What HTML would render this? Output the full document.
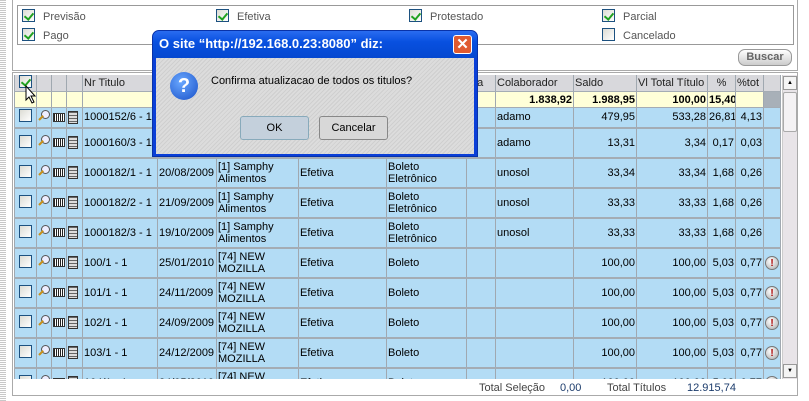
<!DOCTYPE html>
<html><head><meta charset="utf-8"><style>
*{margin:0;padding:0;box-sizing:border-box}
body{width:809px;height:401px;overflow:hidden;background:#fff;font-family:"Liberation Sans",Arial,sans-serif;font-size:11px;color:#000;position:relative}
.abs{position:absolute}
.cb{position:absolute;width:13px;height:13px;border:1px solid #1c5180;background:linear-gradient(135deg,#dcdcd4,#fff)}
.chk::after{content:"";position:absolute;left:3px;top:1px;width:4px;height:7px;border:solid #21a121;border-width:0 2px 2px 0;transform:rotate(40deg)}
.lbl{position:absolute;color:#555;font-size:11px}
.grid{position:absolute;left:14px;top:75px;width:768px;height:304px;overflow:hidden;background:#fff}
table{border-collapse:collapse;table-layout:fixed;width:766px}
td{border-left:1px solid #a0a8b0;border-right:1px solid #a0a8b0;border-bottom:2px solid #a4acb4;background:#b3dcf5;padding:0 1px;line-height:12px;overflow:hidden;white-space:nowrap;vertical-align:middle}
tr.h td{background:#d8d8dc;height:15px;border-bottom:1px solid #a4acb4;color:#222}
tr.t td{background:#ffffd8;height:16px;font-weight:bold;text-align:right;border-bottom:1px solid #a4acb4}
tr.r1 td{height:20px}
tr.r td{height:30px}
.n{text-align:right}
.w{white-space:normal}
.ic{display:inline-block;vertical-align:middle}
.mag{width:12px;height:12px;position:relative;display:inline-block}
.mag::before{content:"";position:absolute;right:0;top:0;width:7px;height:7px;border:1px solid #555;border-radius:50%;background:#eef}
.mag::after{content:"";position:absolute;left:1px;bottom:1px;width:6px;height:2px;background:#c8901a;transform:rotate(-45deg);transform-origin:left}
.bar{width:12px;height:9px;border:1px solid #333;background:repeating-linear-gradient(90deg,#222 0 1px,#fff 1px 2px)}
.doc{width:10px;height:13px;border:1px solid #333;background:repeating-linear-gradient(180deg,#666 0 1px,#ddd 1px 3px)}
.warn{display:inline-block;width:14px;height:14px;border-radius:50%;background:radial-gradient(circle at 40% 35%,#fff,#aaa);border:1px solid #777;color:#a00;font-weight:bold;font-size:10px;text-align:center;line-height:13px}
</style></head><body>
<div class="abs" style="left:0;top:0;width:6px;height:401px;background:repeating-linear-gradient(180deg,#c8c8c8 0 1px,#fff 1px 2px)"></div>
<div class="abs" style="left:12px;top:-1px;width:786px;height:72px;border:1px solid #aaa;background:#fff"></div>
<div class="abs" style="left:17px;top:5px;width:777px;height:40px;border:1px solid #999"></div>
<div class="cb chk" style="left:22px;top:9px"></div><div class="lbl" style="left:43px;top:11px">Previsão</div>
<div class="cb chk" style="left:22px;top:28px"></div><div class="lbl" style="left:43px;top:30px">Pago</div>
<div class="cb chk" style="left:216px;top:9px"></div><div class="lbl" style="left:237px;top:11px">Efetiva</div>
<div class="cb chk" style="left:409px;top:9px"></div><div class="lbl" style="left:430px;top:11px">Protestado</div>
<div class="cb chk" style="left:602px;top:9px"></div><div class="lbl" style="left:623px;top:11px">Parcial</div>
<div class="cb" style="left:602px;top:28px"></div><div class="lbl" style="left:623px;top:30px">Cancelado</div>
<div class="abs" style="left:738px;top:49px;width:54px;height:17px;border:1px solid #999;border-radius:7px;background:linear-gradient(#fff,#ccc);font-weight:bold;color:#666;text-align:center;line-height:15px;font-size:11px">Buscar</div>

<div class="abs" style="left:12px;top:72px;width:786px;height:324px;border-left:1px solid #aaa;border-right:1px solid #aaa;border-bottom:1px solid #aaa;border-top:1px solid #aaa"></div>
<div class="abs" style="left:782px;top:75px;width:15px;height:304px;background:#e8e4e8;border-left:1px solid #ccc"></div>
<div class="abs" style="left:783px;top:76px;width:14px;height:14px;border:1px solid #999;background:#f4f4f4;font-size:6px;text-align:center;line-height:12px">▲</div>
<div class="abs" style="left:783px;top:92px;width:14px;height:40px;border:1px solid #aaa;border-radius:2px;background:#f4f2f4"></div>
<div class="abs" style="left:783px;top:364px;width:14px;height:14px;border:1px solid #999;background:#f4f4f4;font-size:6px;text-align:center;line-height:12px">▼</div>

<div class="grid"><table>
<colgroup><col style="width:22px"><col style="width:15px"><col style="width:15px"><col style="width:16px"><col style="width:75px"><col style="width:59px"><col style="width:82px"><col style="width:88px"><col style="width:80px"><col style="width:29px"><col style="width:78px"><col style="width:63px"><col style="width:71px"><col style="width:28px"><col style="width:28px"><col style="width:17px"></colgroup>
<tr class="h"><td><span class="cb chk" style="position:relative;display:inline-block;left:3px"></span></td><td></td><td></td><td></td><td>Nr Titulo</td><td></td><td></td><td></td><td></td><td>nta</td><td>Colaborador</td><td>Saldo</td><td>Vl Total Título</td><td style="text-align:center">%</td><td>%tot</td><td></td></tr>
<tr class="t"><td></td><td></td><td></td><td></td><td></td><td></td><td></td><td></td><td></td><td></td><td>1.838,92</td><td>1.988,95</td><td>100,00</td><td>15,40</td><td></td><td style="background:#a8b0b8"></td></tr>
<tr class="r1"><td><span class="cb" style="position:relative;display:inline-block;left:3px"></span></td><td><span class="mag"></span></td><td><span class="ic bar"></span></td><td><span class="ic doc"></span></td><td>1000152/6 - 1</td><td></td><td></td><td></td><td></td><td></td><td>adamo</td><td class="n">479,95</td><td class="n">533,28</td><td class="n">26,81</td><td class="n">4,13</td><td></td></tr>
<tr class="r"><td><span class="cb" style="position:relative;display:inline-block;left:3px"></span></td><td><span class="mag"></span></td><td><span class="ic bar"></span></td><td><span class="ic doc"></span></td><td>1000160/3 - 1</td><td></td><td></td><td></td><td></td><td></td><td>adamo</td><td class="n">13,31</td><td class="n">3,34</td><td class="n">0,17</td><td class="n">0,03</td><td></td></tr>
<tr class="r"><td><span class="cb" style="position:relative;display:inline-block;left:3px"></span></td><td><span class="mag"></span></td><td><span class="ic bar"></span></td><td><span class="ic doc"></span></td><td>1000182/1 - 1</td><td>20/08/2009</td><td class="w">[1] Samphy Alimentos</td><td>Efetiva</td><td class="w">Boleto Eletrônico</td><td></td><td>unosol</td><td class="n">33,34</td><td class="n">33,34</td><td class="n">1,68</td><td class="n">0,26</td><td></td></tr>
<tr class="r"><td><span class="cb" style="position:relative;display:inline-block;left:3px"></span></td><td><span class="mag"></span></td><td><span class="ic bar"></span></td><td><span class="ic doc"></span></td><td>1000182/2 - 1</td><td>21/09/2009</td><td class="w">[1] Samphy Alimentos</td><td>Efetiva</td><td class="w">Boleto Eletrônico</td><td></td><td>unosol</td><td class="n">33,33</td><td class="n">33,33</td><td class="n">1,68</td><td class="n">0,26</td><td></td></tr>
<tr class="r"><td><span class="cb" style="position:relative;display:inline-block;left:3px"></span></td><td><span class="mag"></span></td><td><span class="ic bar"></span></td><td><span class="ic doc"></span></td><td>1000182/3 - 1</td><td>19/10/2009</td><td class="w">[1] Samphy Alimentos</td><td>Efetiva</td><td class="w">Boleto Eletrônico</td><td></td><td>unosol</td><td class="n">33,33</td><td class="n">33,33</td><td class="n">1,68</td><td class="n">0,26</td><td></td></tr>
<tr class="r"><td><span class="cb" style="position:relative;display:inline-block;left:3px"></span></td><td><span class="mag"></span></td><td><span class="ic bar"></span></td><td><span class="ic doc"></span></td><td>100/1 - 1</td><td>25/01/2010</td><td class="w">[74] NEW MOZILLA</td><td>Efetiva</td><td>Boleto</td><td></td><td></td><td class="n">100,00</td><td class="n">100,00</td><td class="n">5,03</td><td class="n">0,77</td><td><span class="warn">!</span></td></tr>
<tr class="r"><td><span class="cb" style="position:relative;display:inline-block;left:3px"></span></td><td><span class="mag"></span></td><td><span class="ic bar"></span></td><td><span class="ic doc"></span></td><td>101/1 - 1</td><td>24/11/2009</td><td class="w">[74] NEW MOZILLA</td><td>Efetiva</td><td>Boleto</td><td></td><td></td><td class="n">100,00</td><td class="n">100,00</td><td class="n">5,03</td><td class="n">0,77</td><td><span class="warn">!</span></td></tr>
<tr class="r"><td><span class="cb" style="position:relative;display:inline-block;left:3px"></span></td><td><span class="mag"></span></td><td><span class="ic bar"></span></td><td><span class="ic doc"></span></td><td>102/1 - 1</td><td>24/09/2009</td><td class="w">[74] NEW MOZILLA</td><td>Efetiva</td><td>Boleto</td><td></td><td></td><td class="n">100,00</td><td class="n">100,00</td><td class="n">5,03</td><td class="n">0,77</td><td><span class="warn">!</span></td></tr>
<tr class="r"><td><span class="cb" style="position:relative;display:inline-block;left:3px"></span></td><td><span class="mag"></span></td><td><span class="ic bar"></span></td><td><span class="ic doc"></span></td><td>103/1 - 1</td><td>24/12/2009</td><td class="w">[74] NEW MOZILLA</td><td>Efetiva</td><td>Boleto</td><td></td><td></td><td class="n">100,00</td><td class="n">100,00</td><td class="n">5,03</td><td class="n">0,77</td><td><span class="warn">!</span></td></tr>
<tr class="r"><td><span class="cb" style="position:relative;display:inline-block;left:3px"></span></td><td><span class="mag"></span></td><td><span class="ic bar"></span></td><td><span class="ic doc"></span></td><td>104/1 - 1</td><td>24/05/2010</td><td class="w">[74] NEW MOZILLA</td><td>Efetiva</td><td>Boleto</td><td></td><td></td><td class="n">100,00</td><td class="n">100,00</td><td class="n">5,03</td><td class="n">0,77</td><td><span class="warn">!</span></td></tr>
</table></div>
<div class="abs" style="left:479px;top:382px;color:#444">Total Seleção</div>
<div class="abs" style="left:560px;top:382px;color:#1c3c6c">0,00</div>
<div class="abs" style="left:607px;top:382px;color:#444">Total Títulos</div>
<div class="abs" style="left:687px;top:382px;color:#1c3c6c">12.915,74</div>

<!-- dialog -->
<div class="abs" style="left:152px;top:30px;width:326px;height:127px;background:#0a3fd8;border-radius:7px 7px 0 0;border:1px solid #0832a8">
 <div style="position:absolute;left:0;top:0;width:324px;height:27px;background:linear-gradient(#2a6cf0,#0850e0 40%,#0548d0);border-radius:6px 6px 0 0"></div>
 <div style="position:absolute;left:6px;top:5px;color:#fff;font-weight:bold;font-size:13px;font-family:'Liberation Sans',sans-serif">O site “http://192.168.0.23:8080” diz:</div>
 <div style="position:absolute;right:5px;top:4px;width:19px;height:19px;background:#e05a30;border:1px solid #fff;border-radius:3px;color:#fff;font-size:15px;line-height:17px;text-align:center;font-weight:bold">✕</div>
 <div style="position:absolute;left:3px;top:27px;width:318px;height:96px;background:repeating-linear-gradient(135deg,#cfcfcf 0 1px,#dcdcdc 1px 3px)"></div>
 <div style="position:absolute;left:17px;top:41px;width:28px;height:28px;border-radius:50%;background:radial-gradient(circle at 40% 35%,#6aa8ff,#1850c8);color:#fff;font-weight:bold;font-size:20px;text-align:center;line-height:28px">?</div>
 <div style="position:absolute;left:58px;top:44px;font-size:11px">Confirma atualizacao de todos os titulos?</div>
 <div style="position:absolute;left:87px;top:85px;width:69px;height:24px;border:1px solid #8ab;border-radius:3px;background:#c4d0dc;text-align:center;line-height:22px">OK</div>
 <div style="position:absolute;left:166px;top:85px;width:69px;height:24px;border:1px solid #888;border-radius:3px;background:#d8d8d8;text-align:center;line-height:22px">Cancelar</div>
</div>
<svg class="abs" style="left:25px;top:85px" width="12" height="19" viewBox="0 0 12 19"><path d="M1 1 L1 15 L4 12 L7 18 L9 17 L6 11 L10 11 Z" fill="#fff" stroke="#000"/></svg>
</body></html>
